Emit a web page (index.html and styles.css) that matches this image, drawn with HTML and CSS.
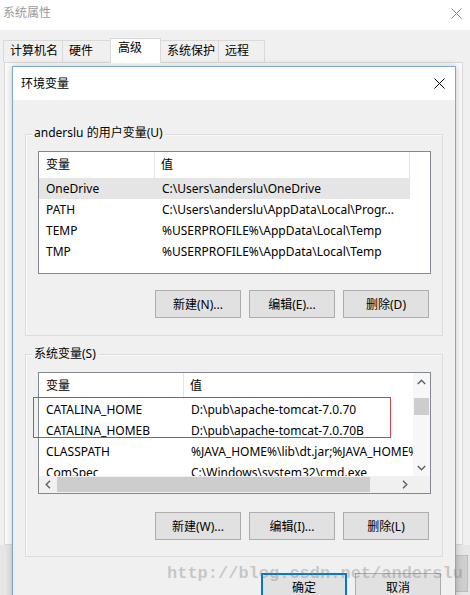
FILE: index.html
```html
<!DOCTYPE html>
<html lang="zh-CN">
<head>
<meta charset="utf-8">
<title>环境变量</title>
<link rel="stylesheet" href="styles.css">
</head>
<body>
<div class="sysprops">
  <div class="sp-title">
    <span class="sp-title-text">系统属性</span>
    <svg class="sp-close" width="11" height="11" viewBox="0 0 11 11"><path d="M0.5 0.5 L10.5 10.5 M10.5 0.5 L0.5 10.5" stroke="#8a8a8a" stroke-width="1" fill="none"/></svg>
  </div>
  <div class="tabs">
    <div class="tab t1">计算机名</div>
    <div class="tab t2">硬件</div>
    <div class="tab t3 active">高级</div>
    <div class="tab t4">系统保护</div>
    <div class="tab t5">远程</div>
  </div>
  <div class="panel"></div>
  <div class="sp-footer"><div class="sp-btn"></div></div>
</div>

<div class="dialog">
  <div class="dlg-title">
    <span>环境变量</span>
    <svg class="dlg-close" width="11" height="11" viewBox="0 0 11 11"><path d="M0.5 0.5 L10.5 10.5 M10.5 0.5 L0.5 10.5" stroke="#000" stroke-width="1" fill="none"/></svg>
  </div>
  <div class="dlg-body">
    <div class="group g-user">
      <div class="group-title">anderslu 的用户变量(U)</div>
      <div class="list list-user">
        <div class="lv-head">
          <div class="c1">变量</div>
          <div class="c2">值</div>
        </div>
        <div class="lv-row sel"><div class="c1">OneDrive</div><div class="c2">C:\Users\anderslu\OneDrive</div></div>
        <div class="lv-row"><div class="c1">PATH</div><div class="c2">C:\Users\anderslu\AppData\Local\Progr...</div></div>
        <div class="lv-row"><div class="c1">TEMP</div><div class="c2">%USERPROFILE%\AppData\Local\Temp</div></div>
        <div class="lv-row"><div class="c1">TMP</div><div class="c2">%USERPROFILE%\AppData\Local\Temp</div></div>
      </div>
      <div class="btns">
        <div class="btn">新建(N)...</div>
        <div class="btn">编辑(E)...</div>
        <div class="btn">删除(D)</div>
      </div>
    </div>

    <div class="group g-sys">
      <div class="group-title">系统变量(S)</div>
      <div class="list list-sys">
        <div class="sys-main">
          <div class="sys-view">
            <div class="lv-head">
              <div class="c1">变量</div>
              <div class="c2">值</div>
            </div>
            <div class="lv-row"><div class="c1">CATALINA_HOME</div><div class="c2">D:\pub\apache-tomcat-7.0.70</div></div>
            <div class="lv-row"><div class="c1">CATALINA_HOMEB</div><div class="c2">D:\pub\apache-tomcat-7.0.70B</div></div>
            <div class="lv-row"><div class="c1">CLASSPATH</div><div class="c2">%JAVA_HOME%\lib\dt.jar;%JAVA_HOME%\lib\tools.jar</div></div>
            <div class="lv-row"><div class="c1">ComSpec</div><div class="c2">C:\Windows\system32\cmd.exe</div></div>
          </div>
          <div class="vscroll">
            <div class="sb-btn"><svg width="9" height="6" viewBox="0 0 9 6"><path d="M0.8 5 L4.5 1.2 L8.2 5" stroke="#606060" stroke-width="1.4" fill="none"/></svg></div>
            <div class="vtrack"><div class="vthumb"></div></div>
            <div class="sb-btn"><svg width="9" height="6" viewBox="0 0 9 6"><path d="M0.8 1 L4.5 4.8 L8.2 1" stroke="#606060" stroke-width="1.4" fill="none"/></svg></div>
          </div>
        </div>
        <div class="hscroll">
          <div class="sb-btn"><svg width="6" height="9" viewBox="0 0 6 9"><path d="M5 0.8 L1.2 4.5 L5 8.2" stroke="#606060" stroke-width="1.4" fill="none"/></svg></div>
          <div class="htrack"><div class="hthumb"></div></div>
          <div class="sb-btn"><svg width="6" height="9" viewBox="0 0 6 9"><path d="M1 0.8 L4.8 4.5 L1 8.2" stroke="#606060" stroke-width="1.4" fill="none"/></svg></div>
          <div class="sb-corner"></div>
        </div>
        <div class="mark"></div>
      </div>
      <div class="btns">
        <div class="btn">新建(W)...</div>
        <div class="btn">编辑(I)...</div>
        <div class="btn">删除(L)</div>
      </div>
    </div>

    <div class="footer">
      <div class="btn default">确定</div>
      <div class="btn">取消</div>
    </div>
  </div>
</div>

<div class="watermark">http://blog.csdn.net/anderslu</div>
</body>
</html>
```

FILE: styles.css
```css
* { box-sizing: border-box; }
html, body { margin: 0; padding: 0; }
body {
  width: 470px;
  height: 595px;
  overflow: hidden;
  position: relative;
  background: #f0f0f0;
  font-family: "Noto Sans", "Noto Sans CJK SC", sans-serif;
  font-size: 12px;
  color: #000;
}

/* background window */
.sysprops { height: 595px; display: flex; flex-direction: column; }
.sp-title {
  height: 30px;
  background: #fff;
  display: flex;
  justify-content: space-between;
  align-items: flex-start;
  padding: 5px 8px 0 3px;
  color: #9a9a9a;
  line-height: 16px;
}
.sp-close { margin-top: 3px; }
.tabs {
  height: 32px;
  display: flex;
  align-items: flex-end;
  padding-left: 3px;
  background: #f0f0f0;
}
.tab {
  height: 22px;
  border: 1px solid #d9d9d9;
  border-bottom: none;
  padding-left: 6px;
  line-height: 20px;
  background: #f0f0f0;
  margin-right: -1px;
  white-space: nowrap;
}
.t1 { width: 60px; }
.t2 { width: 49px; }
.t3 { width: 51px; }
.t4 { width: 59px; }
.t5 { width: 47px; }
.tab.active {
  height: 25px;
  background: #fff;
  margin-bottom: -1px;
  position: relative;
  z-index: 1;
  padding-left: 7px;
  line-height: 18px;
}
.panel {
  height: 483px;
  margin: 0 7px 0 4px;
  border: 1px solid #d9d9d9;
  background: #fbfbfb;
}
.sp-footer {
  flex: 1;
  display: flex;
  justify-content: flex-end;
  padding-top: 10px;
  background: #e6e6e6;
}
.sp-btn {
  width: 75px;
  height: 37px;
  margin-right: 2px;
  background: #cfcfcf;
  border: 1px solid #bdbdbd;
}

/* foreground dialog */
.dialog {
  position: absolute;
  left: 12px;
  top: 66px;
  width: 444px;
  height: 545px;
  border: 1px solid #7fa9d4;
  background: #f0f0f0;
  box-shadow: 0 0 7px rgba(0,0,0,0.22);
}
.dlg-title {
  height: 33px;
  background: #fff;
  display: flex;
  align-items: center;
  justify-content: space-between;
  padding: 0 10px 0 8px;
  line-height: 16px;
}
.dlg-body { padding: 0 12px 0 12px; }

.group {
  position: relative;
  border: 1px solid #dcdcdc;
  box-shadow: inset 1px 1px 0 #fafafa;
}
.g-user { margin-top: 34px; padding: 16px 11px 17px 12px; }
.g-sys { margin-top: 18px; padding: 17px 11px 16px 12px; }
.group-title {
  position: absolute;
  left: 6px;
  top: -10px;
  padding: 0 2px;
  line-height: 16px;
  background: #f0f0f0;
  white-space: nowrap;
}
.g-sys .group-title { top: -9px; }

.list {
  position: relative;
  width: 393px;
  border: 1px solid #828790;
  background: #fff;
}
.list-user { height: 123px; }
.list-sys { height: 122px; }

.lv-head, .lv-row { display: flex; white-space: nowrap; }
.lv-head { height: 26px; line-height: 25px; }
.lv-row { height: 21px; line-height: 21px; }
.c1, .c2 { padding-left: 7px; overflow: hidden; flex: none; }
.list-user .c1 { width: 116px; }
.list-user .c2 { width: 255px; }
.list-user .lv-head .c1 { border-right: 1px solid #e5e5e5; }
.list-user .lv-head .c2 { border-right: 1px solid #e5e5e5; padding-left: 6px; }
.lv-row.sel { width: 371px; background: #e5e5e5; }

.sys-main { display: flex; height: 103px; }
.sys-view { flex: 1; overflow: hidden; }
.list-sys .c1 { width: 145px; }
.list-sys .c2 { width: 300px; }
.list-sys .lv-head .c1 { border-right: 1px solid #e5e5e5; }
.list-sys .lv-head .c2 { padding-left: 6px; }

.vscroll {
  width: 17px;
  display: flex;
  flex-direction: column;
  background: #f7f7f7;
}
.sb-btn {
  width: 17px;
  height: 17px;
  flex: none;
  display: flex;
  align-items: center;
  justify-content: center;
}
.vtrack { flex: 1; padding: 8px 1px 0 1px; }
.vthumb { height: 17px; background: #cdcdcd; }
.hscroll {
  height: 17px;
  display: flex;
  background: #f0f0f0;
}
.htrack { flex: 1; padding: 1px 0 1px 1px; }
.hthumb { width: 313px; height: 15px; background: #cdcdcd; }
.sb-corner { width: 17px; background: #f0f0f0; }

.mark {
  position: absolute;
  left: -6px;
  top: 24px;
  width: 358px;
  height: 41px;
  border: 1px solid #d8404a;
}

.btns {
  display: flex;
  justify-content: flex-end;
  gap: 8px;
  padding-right: 2px;
}
.g-user .btns { margin-top: 16px; }
.g-sys .btns { margin-top: 18px; }
.btn {
  width: 86px;
  height: 28px;
  background: #e1e1e1;
  border: 1px solid #adadad;
  display: flex;
  align-items: center;
  justify-content: center;
  white-space: nowrap;
}
.footer {
  display: flex;
  justify-content: flex-end;
  gap: 8px;
  margin-top: 16px;
  padding-right: 2px;
}
.btn.default { border: 2px solid #0078d7; }

.watermark {
  position: absolute;
  left: 167px;
  top: 564px;
  font-family: "Liberation Mono", monospace;
  font-size: 17px;
  line-height: 20px;
  font-weight: bold;
  color: rgba(120,120,120,0.35);
  white-space: nowrap;
}
```
